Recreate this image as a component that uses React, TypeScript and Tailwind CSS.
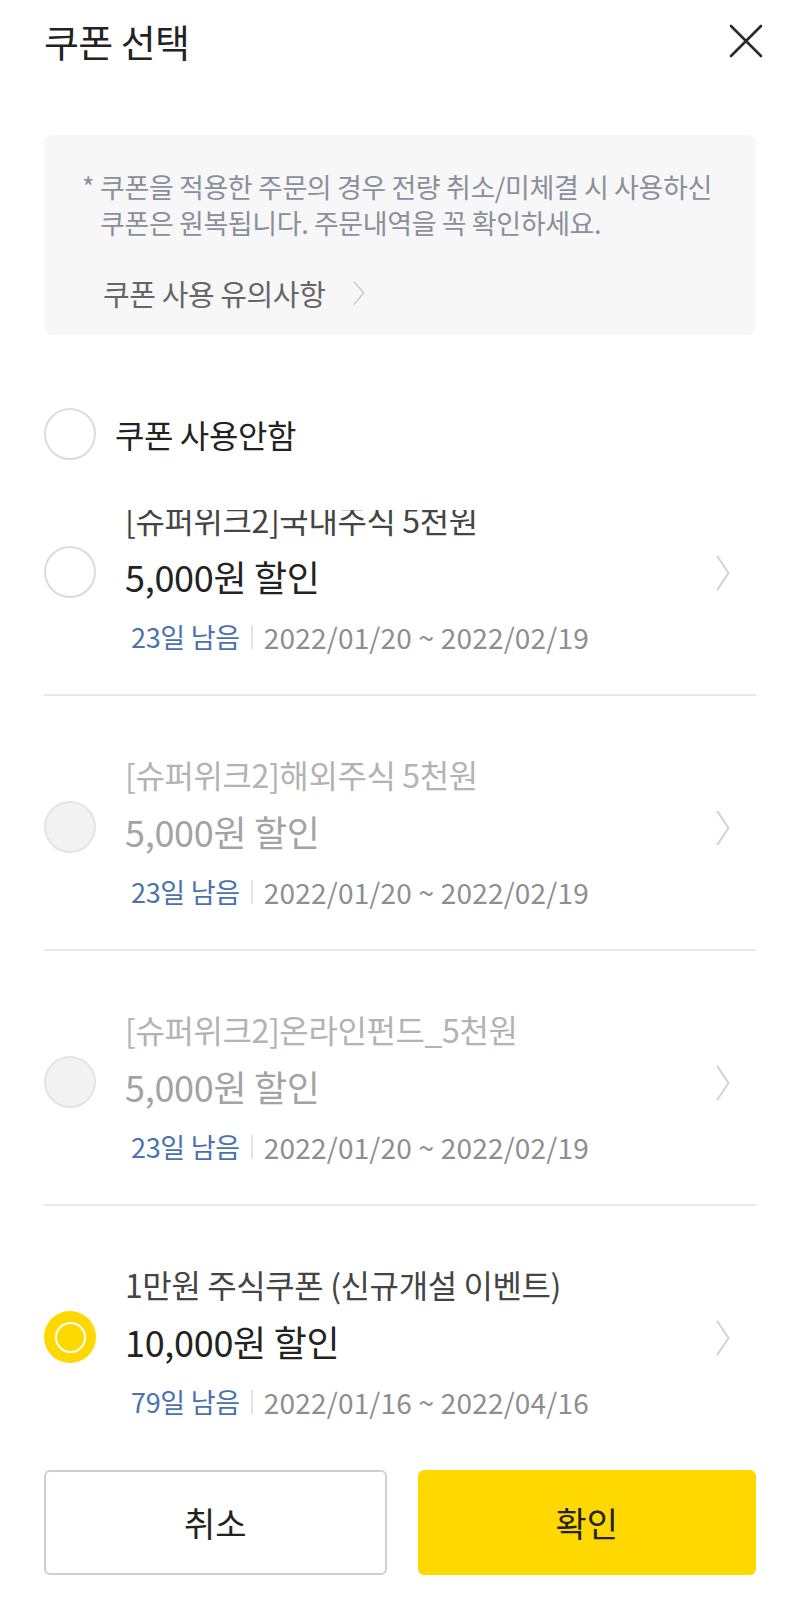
import React from "react";

type Coupon = {
  title: string;
  amount: string;
  days: string;
  period: string;
  disabled?: boolean;
  selected?: boolean;
};

const coupons: Coupon[] = [
  { title: "[슈퍼위크2]국내주식 5천원", amount: "5,000원 할인", days: "23일 남음", period: "2022/01/20 ~ 2022/02/19" },
  { title: "[슈퍼위크2]해외주식 5천원", amount: "5,000원 할인", days: "23일 남음", period: "2022/01/20 ~ 2022/02/19", disabled: true },
  { title: "[슈퍼위크2]온라인펀드_5천원", amount: "5,000원 할인", days: "23일 남음", period: "2022/01/20 ~ 2022/02/19", disabled: true },
  { title: "1만원 주식쿠폰 (신규개설 이벤트)", amount: "10,000원 할인", days: "79일 남음", period: "2022/01/16 ~ 2022/04/16", selected: true },
];

function Radio({ disabled, selected }: { disabled?: boolean; selected?: boolean }) {
  if (selected) {
    return (
      <div className="w-[52px] h-[52px] rounded-full bg-[#ffd800] flex items-center justify-center shrink-0">
        <div className="w-[31px] h-[31px] rounded-full border-[2.5px] border-white" />
      </div>
    );
  }
  if (disabled) {
    return <div className="w-[52px] h-[52px] rounded-full bg-[#f2f2f2] border-2 border-[#e4e4e4] shrink-0" />;
  }
  return <div className="w-[52px] h-[52px] rounded-full bg-white border-2 border-[#dcdcdc] shrink-0" />;
}

function Chevron({ className, color }: { className: string; color: string }) {
  return (
    <svg className={className} viewBox="0 0 14 36" fill="none" preserveAspectRatio="none">
      <path d="M1.5 1.5 L12.5 18 L1.5 34.5" stroke={color} strokeWidth="2" strokeLinecap="round" strokeLinejoin="round" />
    </svg>
  );
}

export default function App() {
  return (
    <div className="w-[800px] h-[1612px] bg-white flex flex-col font-['Noto_Sans_CJK_KR','Noto_Sans',sans-serif] overflow-hidden">
      {/* header */}
      <div className="h-[82px] shrink-0 flex items-center justify-between pl-[44px] pr-[37px]">
        <h1 className="text-[38px] leading-[46px] text-[#222] font-normal tracking-[-0.6px]">쿠폰 선택</h1>
        <svg width="34" height="34" viewBox="0 0 34 34" fill="none">
          <path d="M2 2 L32 32 M32 2 L2 32" stroke="#2a2a2a" strokeWidth="2.6" strokeLinecap="round" />
        </svg>
      </div>

      {/* notice box */}
      <div className="mx-[44px] mt-[53px] h-[200px] shrink-0 rounded-[8px] bg-[#f7f7f8] pt-[34px] pl-[38px]">
        <div className="flex text-[27px] leading-[36px] text-[#8a8f9b] tracking-[-0.4px]">
          <span className="w-[18px] shrink-0">*</span>
          <p className="whitespace-nowrap">
            쿠폰을 적용한 주문의 경우 전량 취소/미체결 시 사용하신
            <br />
            쿠폰은 원복됩니다. 주문내역을 꼭 확인하세요.
          </p>
        </div>
        <div className="mt-[34px] pl-[21px] flex items-center h-[36px]">
          <span className="text-[29px] leading-[36px] text-[#666] tracking-[-0.4px]">쿠폰 사용 유의사항</span>
          <Chevron className="ml-[28px] w-[12px] h-[24px]" color="#c8c8c8" />
        </div>
      </div>

      {/* none option */}
      <div className="mt-[73px] mx-[44px] h-[52px] shrink-0 flex items-center gap-[19px]">
        <Radio />
        <span className="text-[32px] leading-[40px] text-[#222] tracking-[-0.4px]">쿠폰 사용안함</span>
      </div>

      {/* list (scrolled) */}
      <div className="mt-[50px] flex-1 overflow-hidden">
        <div className="-mt-[69px]">
          {coupons.map((c, i) => (
            <div
              key={i}
              className={`mx-[44px] flex pt-[58px] pb-[39px] ${i < coupons.length - 1 ? "border-b-2 border-[#e8e8e8]" : ""}`}
            >
              <div className="mt-[47px]">
                <Radio disabled={c.disabled} selected={c.selected} />
              </div>
              <div className="ml-[29px] flex-1 flex flex-col">
                <div
                  className={`h-[40px] text-[32px] leading-[40px] tracking-[-0.4px] whitespace-nowrap ${c.disabled ? "text-[#b3b3b3]" : "text-[#444]"}`}
                >
                  {c.title}
                </div>
                <div
                  className={`mt-[15px] h-[44px] text-[36px] leading-[44px] tracking-[-0.3px] ${c.disabled ? "text-[#a3a3a3]" : "text-[#222]"}`}
                >
                  {c.amount}
                </div>
                <div className="mt-[21px] h-[36px] pl-[6px] flex items-center leading-[36px]">
                  <span className="text-[27px] text-[#4a72ae] tracking-[-0.3px]">{c.days}</span>
                  <span className="mx-[11px] w-[2px] h-[24px] bg-[#e2e2e2]" />
                  <span className="text-[28px] text-[#8e8e8e] tracking-[0.2px]">{c.period}</span>
                </div>
              </div>
              <div className="mt-[56px] mr-[26px]">
                <Chevron className="w-[14px] h-[36px]" color="#d2d2d2" />
              </div>
            </div>
          ))}
        </div>
      </div>

      {/* buttons */}
      <div className="shrink-0 px-[44px] pb-[37px] flex gap-[31px]">
        <button className="flex-1 h-[105px] rounded-[6px] border-2 border-[#cfcfcf] bg-white text-[34px] text-[#222]">
          취소
        </button>
        <button className="flex-1 h-[105px] rounded-[6px] bg-[#ffd800] text-[34px] text-[#222]">확인</button>
      </div>
    </div>
  );
}
